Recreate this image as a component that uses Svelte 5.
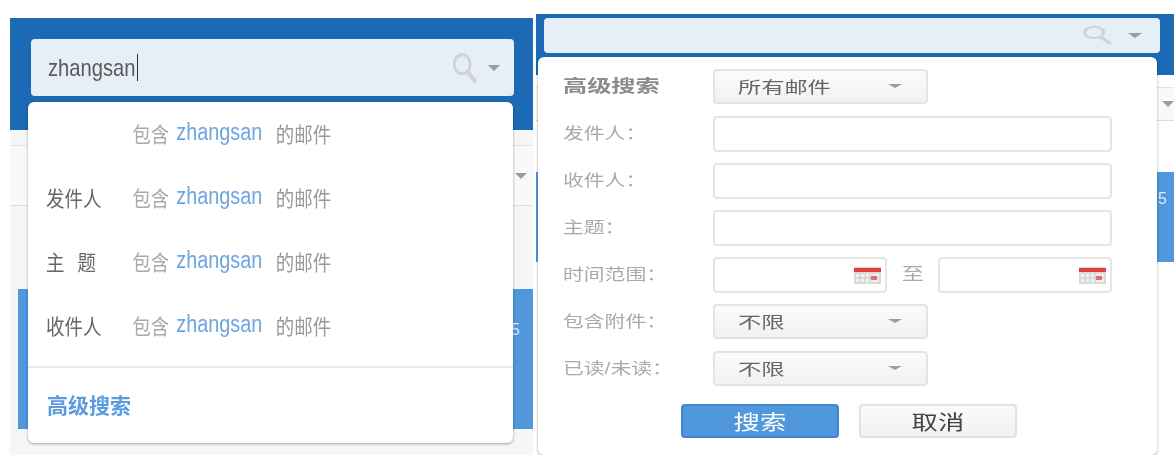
<script>
  const scopes = [
    { label: '', cls: '' },
    { label: '发件人', cls: '' },
    { label: '主 题', cls: 'spaced' },
    { label: '收件人', cls: '' }
  ];
  const query = 'zhangsan';
</script>

{#snippet searchIcon()}
  <svg class="search-icon" viewBox="0 0 28 28" preserveAspectRatio="none" fill="none" stroke="#d2d2d2">
    <circle cx="11" cy="11" r="8.5" stroke-width="3" />
    <path d="M17 18l7.5 8" stroke-width="4" stroke-linecap="round" />
  </svg>
{/snippet}

{#snippet calendar()}
  <svg class="calendar" viewBox="0 0 27 17">
    <rect width="27" height="17" fill="#d9d9d9" />
    <rect y="1" width="27" height="4" fill="#e0403f" />
    <rect x="2" y="7" width="23" height="8" fill="#f1f1f1" />
    <path d="M6 7v8M11 7v8M16 7v8M2 11h23" stroke="#c4c4c4" />
    <rect x="17" y="9" width="6" height="4" fill="#e86a6a" />
  </svg>
{/snippet}

<div class="page">
  <section class="shot left">
    <header class="head">
      <div class="search">
        <span class="typed">{query}</span><span class="cursor"></span>
        <div class="tools">
          {@render searchIcon()}
          <span class="caret"></span>
        </div>
      </div>
    </header>
    <div class="toolbar"><span class="caret"></span></div>
    <div class="row">5</div>

    <div class="menu">
      <ul>
        {#each scopes as s}
          <li>
            <div class="line">
              <span class="scope {s.cls}">{s.label}</span>
              <span class="hint">包含</span>
              <span class="term">{query}</span>
              <span class="suffix">的邮件</span>
            </div>
          </li>
        {/each}
      </ul>
      <a class="advanced" href="#adv">高级搜索</a>
    </div>
  </section>

  <section class="shot right">
    <header class="head">
      <div class="search">
        <div class="tools">
          {@render searchIcon()}
          <span class="caret"></span>
        </div>
      </div>
    </header>
    <div class="toolbar"><span class="caret"></span></div>
    <div class="row">5</div>

    <form class="form">
      <span class="label title"><b>高级搜索</b></span>
      <div class="select"><span>所有邮件</span><i class="caret"></i></div>

      <span class="label"><b>发件人：</b></span>
      <div class="input"></div>

      <span class="label"><b>收件人：</b></span>
      <div class="input"></div>

      <span class="label"><b>主题：</b></span>
      <div class="input"></div>

      <span class="label"><b>时间范围：</b></span>
      <div class="dates">
        <div class="input date">{@render calendar()}</div>
        <span class="to">至</span>
        <div class="input date">{@render calendar()}</div>
      </div>

      <span class="label"><b>包含附件：</b></span>
      <div class="select"><span>不限</span><i class="caret"></i></div>

      <span class="label"><b>已读/未读：</b></span>
      <div class="select"><span>不限</span><i class="caret"></i></div>

      <div class="actions">
        <button type="button" class="btn primary"><span>搜索</span></button>
        <button type="button" class="btn"><span>取消</span></button>
      </div>
    </form>
  </section>
</div>

<style>
  :global(body) {
    background: #fff;
  }

  .page {
    display: flex;
    align-items: flex-start;
    width: 1174px;
    height: 464px;
    overflow: hidden;
    font-family: "Liberation Sans", "Noto Sans CJK SC", sans-serif;
    filter: blur(0.5px);
  }

  .shot {
    position: relative;
    overflow: hidden;
  }
  .shot.left {
    width: 523px;
    height: 437px;
    margin: 18px 0 0 10px;
    background: #f6f6f6;
  }
  .shot.right {
    width: 638px;
    height: 441px;
    margin: 14px 0 0 3px;
    background: #fff;
  }

  .head {
    background: #1c69b5;
    box-sizing: border-box;
  }
  .left .head {
    height: 112px;
    padding: 21px 19px 0 21px;
  }
  .right .head {
    height: 61px;
    padding: 4px 14px 0 8px;
  }

  .search {
    display: flex;
    align-items: center;
    background: #e6eff7;
    border-radius: 4px;
    box-sizing: border-box;
  }
  .left .search {
    height: 57px;
    padding: 0 14px 0 17px;
  }
  .right .search {
    height: 35px;
    padding: 0 18px 0 17px;
  }
  .typed {
    display: inline-block;
    width: 88px;
    font-size: 24px;
    color: #5a5a5a;
    transform: scaleX(0.84);
    transform-origin: left;
    white-space: nowrap;
  }
  .cursor {
    width: 1px;
    height: 27px;
    margin-left: 1px;
    background: #333;
  }
  .tools {
    display: flex;
    align-items: center;
    margin-left: auto;
  }
  .search-icon {
    display: block;
  }
  .left .search-icon {
    width: 26px;
    height: 31px;
    margin-right: 10px;
  }
  .right .search-icon {
    width: 31px;
    height: 19px;
    margin: 0 15px 3px 0;
  }

  .caret {
    display: block;
    width: 0;
    height: 0;
    border-style: solid;
    border-color: #9c9c9c transparent transparent;
    border-width: 6px 6px 0;
  }
  .right .tools .caret {
    border-width: 5px 7px 0;
  }

  .toolbar {
    display: flex;
    align-items: center;
    justify-content: flex-end;
    border-top: 1px solid #e4e4e4;
    border-bottom: 1px solid #dcdcdc;
    background: #f9f9f9;
  }
  .left .toolbar {
    height: 59px;
    margin-top: 15px;
    padding-right: 6px;
  }
  .right .toolbar {
    height: 32px;
    margin-top: 12px;
    padding-right: 0;
  }

  .row {
    background: #5197dc;
    color: #dfeaf6;
    font-size: 16px;
    text-align: right;
    box-sizing: border-box;
  }
  .left .row {
    height: 140px;
    margin: 83px 0 0 8px;
    padding: 32px 13px 0 0;
  }
  .right .row {
    height: 90px;
    margin-top: 51px;
    padding: 18px 7px 0 0;
  }

  /* suggestion dropdown */
  .menu {
    position: absolute;
    left: 18px;
    top: 84px;
    width: 485px;
    height: 341px;
    background: #fff;
    border-radius: 6px;
    box-shadow: 0 1px 3px rgba(0, 0, 0, 0.35);
  }
  ul {
    list-style: none;
    margin: 0;
    padding: 0 0 8px;
    border-bottom: 2px solid #e8e8e8;
  }
  li {
    display: flex;
    align-items: center;
    height: 64px;
    box-sizing: border-box;
    padding: 0 0 3px 18px;
  }
  /* the source shot is squeezed sideways, so the text is too */
  .line {
    display: flex;
    align-items: center;
    font-size: 21px;
    white-space: nowrap;
    transform: scaleX(0.88);
    transform-origin: left;
  }
  .scope {
    width: 98px;
    color: #666;
  }
  .scope.spaced {
    word-spacing: 9px;
  }
  .hint {
    color: #aaa;
  }
  .term {
    margin: 0 15px 0 6px;
    font-size: 23.5px;
    color: #6ea6e0;
    transform: scaleX(0.96);
    width: 100px;
  }
  .suffix {
    color: #999;
  }
  .advanced {
    display: block;
    padding: 24px 0 0 19px;
    font-size: 21px;
    font-weight: 700;
    line-height: 28px;
    color: #5b9be0;
    text-decoration: none;
  }

  /* advanced search form */
  .form {
    position: absolute;
    left: 2px;
    top: 43px;
    width: 619px;
    height: 398px;
    box-sizing: border-box;
    padding: 12px 0 0 25px;
    background: #fff;
    border-radius: 6px;
    box-shadow: 0 1px 3px rgba(0, 0, 0, 0.35);
    display: grid;
    grid-template-columns: 150px 399px;
    grid-auto-rows: 47px;
    align-items: start;
  }
  .label {
    height: 35px;
    line-height: 35px;
    font-size: 16px;
    color: #aaa;
    white-space: nowrap;
  }
  .label b {
    display: inline-block;
    font-weight: 400;
    transform: scaleX(1.3);
    transform-origin: left;
  }
  .label.title {
    font-size: 17px;
    color: #8b8b8b;
  }
  .label.title b {
    font-weight: 700;
    transform: scaleX(1.42);
  }
  .select {
    display: flex;
    align-items: center;
    justify-content: space-between;
    width: 215px;
    height: 35px;
    box-sizing: border-box;
    padding: 0 24px 2px 23px;
    border: 2px solid #e4e4e4;
    border-radius: 4px;
    background: linear-gradient(#fbfbfb, #f1f1f1);
    font-size: 16px;
    color: #666;
  }
  .select span {
    transform: scaleX(1.45);
    transform-origin: left;
  }
  .select .caret {
    border-width: 4px 7px 0;
  }
  .input {
    height: 36px;
    box-sizing: border-box;
    border: 2px solid #e6e6e6;
    border-radius: 4px;
    background: #fff;
  }
  .dates {
    display: flex;
    align-items: flex-start;
  }
  .date {
    display: flex;
    align-items: center;
    justify-content: flex-end;
    width: 174px;
    padding-right: 4px;
  }
  .calendar {
    width: 27px;
    height: 17px;
    display: block;
  }
  .to {
    width: 52px;
    line-height: 35px;
    text-align: center;
    font-size: 17px;
    color: #aaa;
    transform: scaleX(1.3);
  }
  .actions {
    grid-column: 1 / -1;
    display: flex;
    gap: 20px;
    margin: 6px 0 0 118px;
  }
  .btn {
    width: 158px;
    height: 34px;
    padding: 0;
    border: 2px solid #e2e2e2;
    border-radius: 4px;
    background: linear-gradient(#fbfbfb, #f1f1f1);
    font: inherit;
    font-size: 20px;
    color: #444;
  }
  .btn span {
    display: inline-block;
    transform: scaleX(1.32);
  }
  .btn.primary {
    border-color: #4587cc;
    background: #5197dc;
    color: #fff;
  }
</style>
